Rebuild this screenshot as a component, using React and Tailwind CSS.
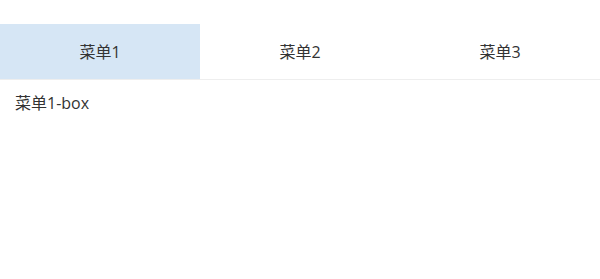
export default function App() {
  const tabs = ["菜单1", "菜单2", "菜单3"];
  return (
    <div className="w-[600px] h-[279px] bg-white pt-[24px] text-[#333] text-[16px]" style={{ fontFamily: '"Open Sans", "Noto Sans CJK SC", sans-serif' }}>
      <div className="flex border-b border-[#eeeeee]">
        {tabs.map((t, i) => (
          <div
            key={t}
            className={`flex-1 h-[55px] flex items-center justify-center ${i === 0 ? "bg-[#d6e6f5]" : ""}`}
          >
            {t}
          </div>
        ))}
      </div>
      <div className="px-[15px] pt-[11px] leading-[24px]">菜单1-box</div>
    </div>
  );
}
